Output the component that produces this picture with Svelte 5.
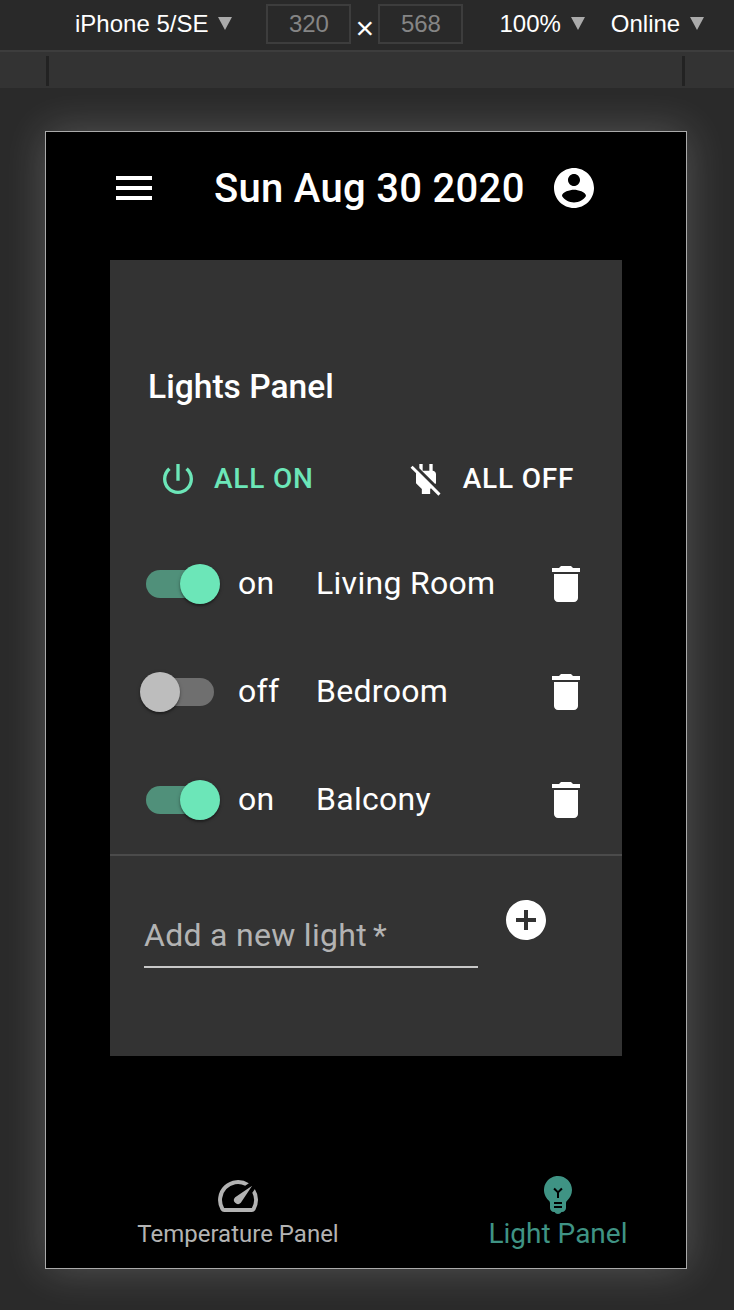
<script>
  // icon paths, material 24 grid
  const icons = {
    menu: 'M3 18h18v-2H3v2zm0-5h18v-2H3v2zm0-7v2h18V6H3z',
    account: 'M12 2C6.48 2 2 6.48 2 12s4.48 10 10 10 10-4.48 10-10S17.52 2 12 2zm0 3c1.66 0 3 1.34 3 3s-1.34 3-3 3-3-1.34-3-3 1.34-3 3-3zm0 14.2c-2.5 0-4.71-1.28-6-3.22.03-1.99 4-3.08 6-3.08 1.99 0 5.97 1.09 6 3.08-1.29 1.94-3.5 3.22-6 3.22z',
    power: 'M13 3h-2v10h2V3zm4.83 2.17l-1.42 1.42C17.99 7.86 19 9.81 19 12c0 3.87-3.13 7-7 7s-7-3.13-7-7c0-2.19 1.01-4.14 2.58-5.42L6.17 5.17C4.23 6.82 3 9.26 3 12c0 4.97 4.03 9 9 9s9-4.03 9-9c0-2.74-1.23-5.18-3.17-6.83z',
    plugOff: 'M18 14.49V9c0-1-1.01-2.01-2-2V3h-2v4h-4V3H8v2.48l9.51 9.5.49-.49zm-1.76 1.77L7.2 7.2l-.01.01L3.98 4 2.71 5.25l3.36 3.36C6.04 8.74 6 8.87 6 9v5.48L9.5 18v3h5v-3l.48-.48L19.45 22l1.26-1.28-4.47-4.46z',
    trash: 'M6 19c0 1.1.9 2 2 2h8c1.1 0 2-.9 2-2V7H6v12zM19 4h-3.5l-1-1h-5l-1 1H5v2h14V4z',
    add: 'M12 2C6.48 2 2 6.48 2 12s4.48 10 10 10 10-4.48 10-10S17.52 2 12 2zm5 11h-4v4h-2v-4H7v-2h4V7h2v4h4v2z',
    speed: 'M20.38 8.57l-1.23 1.85a8 8 0 0 1-.22 7.58H5.07A8 8 0 0 1 15.58 6.85l1.85-1.23A10 10 0 0 0 3.35 19a2 2 0 0 0 1.72 1h13.85a2 2 0 0 0 1.74-1 10 10 0 0 0-.27-10.44zm-9.79 6.84a2 2 0 0 0 2.83 0l5.66-8.49-8.49 5.66a2 2 0 0 0 0 2.83z',
    bulb: 'M12 3c-.46 0-.93.04-1.4.14-2.76.53-4.96 2.76-5.48 5.52-.48 2.61.48 5.01 2.22 6.56.43.38.66.91.66 1.47V19c0 1.1.9 2 2 2h.28c.35.6.98 1 1.72 1s1.38-.4 1.72-1H14c1.1 0 2-.9 2-2v-2.31c0-.55.22-1.09.64-1.46C18.09 13.95 19 12.08 19 10c0-3.87-3.13-7-7-7zm2 16h-4v-1h4v1zm0-2h-4v-1h4v1zm-1.5-5.59V14h-1v-2.59L9.67 9.59l.71-.71L12 10.5l1.62-1.62.71.71-1.83 1.82z'
  };

  let lights = $state([
    { name: 'Living Room', on: true },
    { name: 'Bedroom', on: false },
    { name: 'Balcony', on: true }
  ]);
</script>

{#snippet icon(d)}
  <svg class="icon" viewBox="0 0 24 24" fill="currentColor"><path {d} /></svg>
{/snippet}

<div class="page">
  <div class="toolbar">
    <span class="device-name">iPhone 5/SE</span><i class="tri first"></i>
    <span class="dim">320</span>
    <span class="times">×</span>
    <span class="dim">568</span>
    <span class="zoom">100%</span><i class="tri"></i>
    <span class="net">Online</span><i class="tri"></i>
  </div>
  <div class="ruler"><div class="tick left"></div><div class="tick right"></div></div>

  <div class="phone">
    <header>
      <span class="menu">{@render icon(icons.menu)}</span>
      <h1>Sun Aug 30 2020</h1>
      <span class="account">{@render icon(icons.account)}</span>
    </header>

    <section class="card">
      <h2>Lights Panel</h2>
      <div class="actions">
        <button class="all on">{@render icon(icons.power)}<span>ALL ON</span></button>
        <button class="all off">{@render icon(icons.plugOff)}<span>ALL OFF</span></button>
      </div>

      {#each lights as light}
        <div class="row">
          <button class="switch" class:checked={light.on} aria-label={light.name} onclick={() => (light.on = !light.on)}>
            <span class="track"></span>
            <span class="thumb"></span>
          </button>
          <span class="state">{light.on ? 'on' : 'off'}</span>
          <span class="name">{light.name}</span>
          <span class="trash">{@render icon(icons.trash)}</span>
        </div>
      {/each}

      <div class="divider"></div>

      <form class="add-form" onsubmit={(e) => e.preventDefault()}>
        <div class="field">Add a new light<span class="req">*</span></div>
        <span class="add">{@render icon(icons.add)}</span>
      </form>
    </section>

    <nav>
      <div class="tab">
        {@render icon(icons.speed)}
        <span>Temperature Panel</span>
      </div>
      <div class="tab selected">
        {@render icon(icons.bulb)}
        <span>Light Panel</span>
      </div>
    </nav>
  </div>
</div>

<style>
  :global(body) {
    margin: 0;
    background: #292929;
  }

  .page {
    width: 734px;
    height: 1310px;
    overflow: hidden;
    background: #2a2a2a;
    font-family: Roboto, sans-serif;
    color: #fff;
  }

  .toolbar {
    display: flex;
    align-items: center;
    box-sizing: border-box;
    height: 52px;
    padding: 0 0 2px 75px;
    background: #292929;
    border-bottom: 2px solid #3d3d3d;
    font-family: "Liberation Sans", Arial, sans-serif;
    font-size: 24px;
  }

  .tri {
    width: 0;
    height: 0;
    margin-left: 10px;
    border-left: 7px solid transparent;
    border-right: 7px solid transparent;
    border-top: 13px solid #aaa;
    margin-top: -2px;
  }

  .tri.first {
    margin-right: 34px;
  }

  .dim {
    box-sizing: border-box;
    width: 85px;
    height: 40px;
    line-height: 36px;
    text-align: center;
    color: #858585;
    border: 2px solid #3d3d3d;
  }

  .times {
    box-sizing: border-box;
    width: 27px;
    height: 40px;
    padding-top: 4px;
    text-align: center;
    font-size: 32px;
    line-height: 40px;
  }

  .zoom {
    margin-left: 36px;
  }

  .net {
    margin-left: 26px;
  }

  .ruler {
    display: flex;
    justify-content: space-between;
    box-sizing: border-box;
    height: 36px;
    padding: 4px 49px 2px 46px;
    background: #333;
  }

  .tick {
    width: 3px;
    background: #222;
  }

  .phone {
    display: flex;
    flex-direction: column;
    box-sizing: border-box;
    width: 642px;
    height: 1138px;
    margin: 43px 0 0 45px;
    background: #000;
    border: 1px solid #aaa;
    box-shadow: 0 0 40px rgba(255, 255, 255, 0.2);
  }

  .icon {
    display: block;
    flex-shrink: 0;
    width: 48px;
    height: 48px;
  }

  header {
    display: flex;
    align-items: center;
    height: 48px;
    padding: 32px 0 0 64px;
  }

  h1 {
    margin: 2px 26px 0 56px;
    width: 310px;
    font-size: 40px;
    font-weight: 500;
    line-height: 48px;
    white-space: nowrap;
    letter-spacing: 0.3px;
  }

  .card {
    display: flex;
    flex-direction: column;
    box-sizing: border-box;
    width: 512px;
    height: 796px;
    margin: 48px 0 0 64px;
    background: #333;
  }

  h2 {
    margin: 107px 0 0 38px;
    font-size: 33.6px;
    font-weight: 500;
    line-height: 40px;
  }

  .actions {
    display: flex;
    align-items: center;
    margin-top: 48px;
    height: 48px;
  }

  button {
    border: 0;
    background: none;
    padding: 0;
    font: inherit;
    color: inherit;
  }

  .all {
    display: flex;
    align-items: center;
    gap: 16px;
    font-size: 28px;
    font-weight: 500;
    letter-spacing: 0.8px;
    line-height: 48px;
  }

  .all .icon {
    width: 40px;
    height: 40px;
  }

  .all.on {
    margin-left: 48px;
    color: #6ce6b8;
  }

  .all.off {
    gap: 17px;
    margin-left: 92px;
  }

  .row {
    display: flex;
    align-items: center;
    height: 48px;
    margin-top: 60px;
    font-size: 32px;
    letter-spacing: 0.3px;
  }

  .actions + .row {
    margin-top: 57px;
  }

  .switch {
    position: relative;
    width: 68px;
    height: 28px;
    margin-left: 36px;
  }

  .track {
    position: absolute;
    inset: 0;
    border-radius: 14px;
    background: #6f6f6f;
  }

  .checked .track {
    background: #50907a;
  }

  .thumb {
    position: absolute;
    top: -6px;
    left: -6px;
    width: 40px;
    height: 40px;
    border-radius: 50%;
    background: #bdbdbd;
    box-shadow: 0 2px 2px rgba(0, 0, 0, 0.3), 0 1px 4px rgba(0, 0, 0, 0.2);
  }

  .checked .thumb {
    left: 34px;
    background: #6ce6b8;
  }

  .state {
    width: 78px;
    margin: 0 0 2px 24px;
  }

  .name {
    flex: 1;
    margin-bottom: 2px;
  }

  .trash {
    margin-right: 32px;
  }

  .divider {
    height: 2px;
    margin-top: 30px;
    background: #4b4b4b;
  }

  .add-form {
    display: flex;
    align-items: flex-start;
    padding: 40px 0 0 34px;
  }

  .field {
    box-sizing: border-box;
    width: 334px;
    height: 72px;
    padding-top: 19px;
    font-size: 32px;
    line-height: 40px;
    letter-spacing: 0.3px;
    color: #b3b3b3;
    border-bottom: 2px solid #c8c8c8;
  }

  .req {
    margin-left: 6px;
  }

  .add {
    margin-left: 24px;
  }

  nav {
    display: flex;
    gap: 80px;
    padding: 116px 0 0 72px;
  }

  .tab {
    display: flex;
    flex-direction: column;
    align-items: center;
    width: 240px;
    color: #b3b3b3;
    font-size: 24px;
    white-space: nowrap;
  }

  .tab span {
    margin-top: -2px;
    line-height: 32px;
  }

  .tab.selected {
    margin-top: -2px;
    color: #3f9384;
    font-size: 28px;
  }

  .tab.selected span {
    margin-top: -4px;
    line-height: 40px;
  }
</style>
